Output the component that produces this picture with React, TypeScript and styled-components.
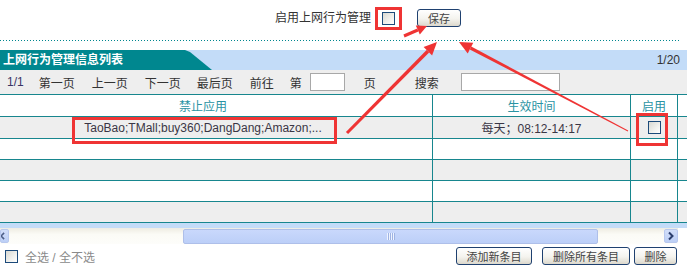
import { FC, useEffect, useRef } from 'react'
import styled, { createGlobalStyle } from 'styled-components'

const teal = '#00878f'
const gridLine = '#17868e'
const lightBlue = '#c3dcf8'
const red = '#ef3434'

const GlobalStyle = createGlobalStyle`
  html, body {
    margin: 0;
    padding: 0;
    background: #fff;
    overflow: hidden;
  }
  body {
    font-family: "Liberation Sans", "Noto Sans CJK SC", sans-serif;
    font-size: 12px;
    color: #333;
  }
`

const Page = styled.div`
  position: relative;
  width: 687px;
  height: 277px;
  overflow: hidden;
`

const Panel = styled.div`
  width: 700px;
`

const TopBar = styled.div`
  display: flex;
  align-items: center;
  height: 36px;
  padding-left: 275px;
`

const Label = styled.span`
  line-height: 14px;
  white-space: nowrap;
`

const Check = styled.span<{ $ml?: number }>`
  display: inline-block;
  flex: none;
  box-sizing: border-box;
  width: 13px;
  height: 13px;
  margin-left: ${(p) => p.$ml ?? 0}px;
  border: 1px solid #1c4a7a;
  background: linear-gradient(135deg, #d8d8d2 0%, #f3f3f0 65%, #ffffff 100%);
`

const Btn = styled.button<{ $w: number; $ml?: number }>`
  box-sizing: border-box;
  flex: none;
  width: ${(p) => p.$w}px;
  height: 18px;
  margin-left: ${(p) => p.$ml ?? 0}px;
  padding: 0;
  border: 1px solid #1f4170;
  border-radius: 3px;
  background: linear-gradient(#ffffff 0%, #f4f3ee 55%, #dcd8cc 100%);
  font: 11px "Noto Sans CJK SC", sans-serif;
  line-height: 16px;
  color: #444;
  white-space: nowrap;
`

const Dotted = styled.div`
  width: 680px;
  height: 1px;
  margin-top: 4px;
  background: repeating-linear-gradient(to right, ${teal} 0 1px, transparent 1px 3px);
`

const TitleBar = styled.div`
  display: flex;
  align-items: center;
  height: 20px;
  margin-top: 9px;
  background: ${lightBlue};
`

const TitleTab = styled.div`
  width: 212px;
  height: 20px;
  padding-left: 3px;
  box-sizing: border-box;
  background: ${teal};
  clip-path: polygon(0 0, 185px 0, 190px 2px, 212px 100%, 0 100%);
  color: #fff;
  font-weight: bold;
  line-height: 20px;
  white-space: nowrap;
`

const PageCount = styled.span`
  margin-left: auto;
  padding-right: 20px;
  color: #333;
`

const Toolbar = styled.div`
  display: flex;
  align-items: center;
  height: 24px;
  padding-left: 7px;
  background: #eeeeee;
`

const ToolText = styled.span<{ $ml?: number; $tone?: string }>`
  margin-left: ${(p) => p.$ml ?? 0}px;
  color: ${(p) => p.$tone ?? '#333'};
  white-space: nowrap;
`

const TextBox = styled.input<{ $w: number; $ml: number }>`
  box-sizing: border-box;
  width: ${(p) => p.$w}px;
  height: 18px;
  margin: 0 0 0 ${(p) => p.$ml}px;
  padding: 0 2px;
  border: 1px solid #a8a8a8;
  background: #fff;
  font: 12px "Liberation Sans", sans-serif;
`

const TableViewport = styled.div`
  width: 687px;
  overflow: hidden;
`

const Grid = styled.div`
  width: 1004px;
  border-top: 1px solid ${gridLine};
`

const Row = styled.div<{ $h: number; $alt?: boolean }>`
  display: grid;
  grid-template-columns: 459px 198px 47px 300px;
  box-sizing: border-box;
  height: ${(p) => p.$h}px;
  border-bottom: 1px solid ${gridLine};
  background: ${(p) => (p.$alt ? '#eeeeee' : '#ffffff')};
`

const Cell = styled.div<{ $head?: boolean }>`
  display: flex;
  align-items: center;
  justify-content: center;
  box-sizing: border-box;
  border-right: 1px solid ${gridLine};
  color: ${(p) => (p.$head ? '#2a93a3' : '#3a3645')};
  white-space: nowrap;
`

const BlueStrip = styled.div`
  height: 5px;
  background: ${lightBlue};
`

const ScrollBar = styled.div`
  display: flex;
  align-items: center;
  width: 678px;
  height: 16px;
  background: linear-gradient(#eeece2, #fbfbf6 40%, #fdfdfa);
`

const ScrollBtn = styled.div<{ $w: number }>`
  display: flex;
  align-items: center;
  justify-content: center;
  flex: none;
  width: ${(p) => p.$w}px;
  height: 14px;
  overflow: hidden;
  border-radius: 2px;
  background: linear-gradient(#d2def9, #bccff6);
  border: 1px solid #b8c8ee;
  box-sizing: border-box;
`

const Track = styled.div`
  display: flex;
  align-items: center;
  flex: 1;
  height: 16px;
`

const Thumb = styled.div<{ $left: number; $w: number }>`
  display: flex;
  align-items: center;
  justify-content: center;
  box-sizing: border-box;
  width: ${(p) => p.$w}px;
  height: 15px;
  margin-left: ${(p) => p.$left}px;
  border: 1px solid #aebfe9;
  border-radius: 2px;
  background: linear-gradient(#c9d8fc, #bccff8);
`

const Grip = styled.span`
  width: 8px;
  height: 7px;
  background: repeating-linear-gradient(to right, #eef3ff 0 1px, #9fb3e2 1px 2px);
`

const Footer = styled.div`
  display: flex;
  align-items: center;
  box-sizing: border-box;
  width: 677px;
  height: 24px;
  padding-left: 5px;
`

const FooterLabel = styled.span`
  margin-left: 7px;
  color: #8a8a8a;
  white-space: nowrap;
`

const ButtonGroup = styled.div`
  display: flex;
  margin-left: auto;
`

const Overlay = styled.svg`
  position: absolute;
  left: 0;
  top: 0;
  pointer-events: none;
`

type Pt = [number, number]
const pts = (list: Pt[]) => list.map(([x, y]) => `${x.toFixed(1)},${y.toFixed(1)}`).join(' ')

const arrow = (x1: number, y1: number, x2: number, y2: number, tailW: number, headW: number, headLen: number, headHalf: number) => {
  const dx = x2 - x1
  const dy = y2 - y1
  const len = Math.hypot(dx, dy)
  const ux = dx / len
  const uy = dy / len
  const nx = -uy
  const ny = ux
  const bx = x2 - ux * headLen
  const by = y2 - uy * headLen
  const shaft: Pt[] = [
    [x1 + (nx * tailW) / 2, y1 + (ny * tailW) / 2],
    [bx + (nx * headW) / 2, by + (ny * headW) / 2],
    [bx - (nx * headW) / 2, by - (ny * headW) / 2],
    [x1 - (nx * tailW) / 2, y1 - (ny * tailW) / 2],
  ]
  const head: Pt[] = [
    [x2, y2],
    [bx + nx * headHalf, by + ny * headHalf],
    [bx - nx * headHalf, by - ny * headHalf],
  ]
  return { shaft: pts(shaft), head: pts(head) }
}

const arrows = [
  arrow(347, 133, 437, 42, 3, 3.5, 13, 6),
  arrow(628, 131, 459, 42, 0.8, 3.2, 13, 6),
  arrow(404, 36, 427, 26, 3, 3, 10, 5),
]

const Annotations: FC = () => (
  <Overlay width={687} height={277}>
    <g fill="none" stroke={red} strokeWidth={3}>
      <rect x={376.5} y={8.5} width={24} height={20} />
      <rect x={73.5} y={118.5} width={262} height={24} />
      <rect x={637.5} y={114.5} width={29} height={30} />
    </g>
    {arrows.map((a, i) => (
      <g key={i} fill={red}>
        <polygon points={a.shaft} />
        <polygon points={a.head} />
      </g>
    ))}
  </Overlay>
)

const rows = [
  { apps: 'TaoBao;TMall;buy360;DangDang;Amazon;...', time: '每天；08:12-14:17', check: true },
  {},
  {},
  {},
  {},
]

const App: FC = () => {
  const viewport = useRef<HTMLDivElement>(null)

  useEffect(() => {
    if (viewport.current) viewport.current.scrollLeft = 26
  }, [])

  return (
    <Page>
      <GlobalStyle />
      <Panel>
        <TopBar>
          <Label>启用上网行为管理</Label>
          <Check $ml={11} />
          <Btn $w={44} $ml={22}>保存</Btn>
        </TopBar>
        <Dotted />
        <TitleBar>
          <TitleTab>上网行为管理信息列表</TitleTab>
          <PageCount>1/20</PageCount>
        </TitleBar>
        <Toolbar>
          <ToolText $tone="#3b3566">1/1</ToolText>
          <ToolText $ml={15}>第一页</ToolText>
          <ToolText $ml={17}>上一页</ToolText>
          <ToolText $ml={17}>下一页</ToolText>
          <ToolText $ml={16}>最后页</ToolText>
          <ToolText $ml={17}>前往</ToolText>
          <ToolText $ml={16}>第</ToolText>
          <TextBox $w={35} $ml={8} />
          <ToolText $ml={19}>页</ToolText>
          <ToolText $ml={39}>搜索</ToolText>
          <TextBox $w={99} $ml={22} />
        </Toolbar>
      </Panel>
      <TableViewport ref={viewport}>
        <Grid>
          <Row $h={22}>
            <Cell $head>禁止应用</Cell>
            <Cell $head>生效时间</Cell>
            <Cell $head>启用</Cell>
            <Cell $head />
          </Row>
          {rows.map((r, i) => (
            <Row key={i} $h={i === 0 ? 22 : 21} $alt={i % 2 === 0}>
              <Cell>{r.apps}</Cell>
              <Cell>{r.time}</Cell>
              <Cell>{r.check && <Check />}</Cell>
              <Cell />
            </Row>
          ))}
        </Grid>
      </TableViewport>
      <BlueStrip />
      <ScrollBar>
        <ScrollBtn $w={9}>
          <svg width={9} height={12} viewBox="0 0 9 12">
            <path d="M4 2 L0 6 L4 10" fill="none" stroke="#4d5e86" strokeWidth={2} />
          </svg>
        </ScrollBtn>
        <Track>
          <Thumb $left={174} $w={415}>
            <Grip />
          </Thumb>
        </Track>
        <ScrollBtn $w={14}>
          <svg width={8} height={10} viewBox="0 0 8 10">
            <path d="M2 1.5 L5.5 5 L2 8.5" fill="none" stroke="#2c3f6e" strokeWidth={2} />
          </svg>
        </ScrollBtn>
      </ScrollBar>
      <Footer>
        <Check />
        <FooterLabel>全选 / 全不选</FooterLabel>
        <ButtonGroup>
          <Btn $w={76}>添加新条目</Btn>
          <Btn $w={88} $ml={10}>删除所有条目</Btn>
          <Btn $w={43} $ml={4}>删除</Btn>
        </ButtonGroup>
      </Footer>
      <Annotations />
    </Page>
  )
}

export default App
